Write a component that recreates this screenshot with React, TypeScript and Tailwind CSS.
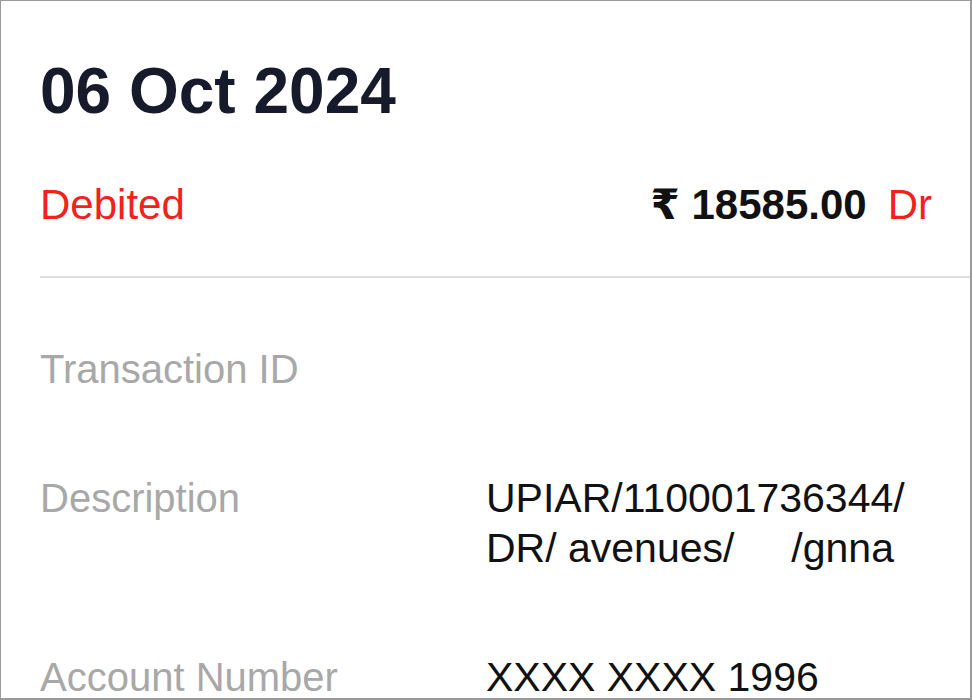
const details = [
  { label: "Transaction ID", lines: [""] },
  { label: "Description", lines: ["UPIAR/110001736344/", "DR/ avenues/     /gnna"] },
  { label: "Account Number", lines: ["XXXX XXXX 1996"] },
];

export default function App() {
  return (
    <div
      className="w-[972px] h-[700px] overflow-hidden bg-white border-l border-t border-r-2 border-b-2 border-[#9a9a9a] pl-[39px] pt-[58px]"
      style={{ fontFamily: '"Liberation Sans", Arial, "DejaVu Sans", sans-serif' }}
    >
      <h1 className="text-[64px] leading-[64px] font-bold text-[#161a2b]">06 Oct 2024</h1>

      <div className="mt-[61px] pr-[38px] flex items-center justify-between h-[42px]">
        <span className="text-[42px] leading-[42px] text-[#f1221b]">Debited</span>
        <div className="flex items-center gap-[21px]">
          <span className="text-[42px] leading-[42px] font-bold text-[#111]">₹ 18585.00</span>
          <span className="text-[42px] leading-[42px] text-[#f1221b]">Dr</span>
        </div>
      </div>

      <div className="mt-[50px] h-[2px] bg-[#dedede]" />

      <div className="mt-[66px] flex flex-col gap-[79px]">
        {details.map((d) => (
          <div key={d.label} className="grid grid-cols-[446px_1fr] pr-[38px]">
            <span className="text-[40px] leading-[50px] text-[#a8a8a8]">{d.label}</span>
            <div className="flex flex-col">
              {d.lines.map((l, i) => (
                <span key={i} className="text-[41px] leading-[50px] text-[#111] whitespace-pre h-[50px]">
                  {l}
                </span>
              ))}
            </div>
          </div>
        ))}
      </div>
    </div>
  );
}
